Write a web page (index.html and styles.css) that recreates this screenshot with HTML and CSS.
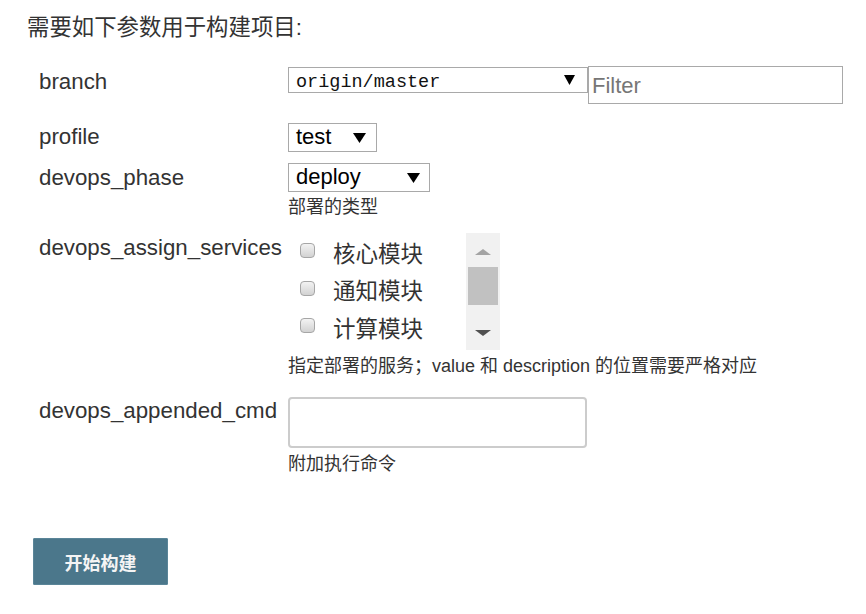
FILE: index.html
```html
<!DOCTYPE html>
<html lang="zh-CN">
<head>
<meta charset="utf-8">
<title>构建参数</title>
<link rel="stylesheet" href="styles.css">
</head>
<body>
<div class="page">
  <div class="title">需要如下参数用于构建项目:</div>
  <div class="params">
    <div class="row row-branch">
      <div class="label lb-branch">branch</div>
      <div class="value value-inline">
        <div class="select select-branch">
          <span class="sel-text mono">origin/master</span>
          <svg class="arrow arrow-branch" width="11" height="10" viewBox="0 0 11 10"><polygon points="0,0 11,0 5.5,10" fill="#000"/></svg>
        </div>
        <input class="filter" type="text" placeholder="Filter">
      </div>
    </div>

    <div class="row row-profile">
      <div class="label lb-profile">profile</div>
      <div class="value">
        <div class="select select-test">
          <span class="sel-text">test</span>
          <svg class="arrow" width="13" height="10" viewBox="0 0 13 10"><polygon points="0,0 13,0 6.5,10" fill="#000"/></svg>
        </div>
      </div>
    </div>

    <div class="row row-phase">
      <div class="label lb-phase">devops_phase</div>
      <div class="value">
        <div class="select select-deploy">
          <span class="sel-text">deploy</span>
          <svg class="arrow" width="13" height="10" viewBox="0 0 13 10"><polygon points="0,0 13,0 6.5,10" fill="#000"/></svg>
        </div>
        <div class="hint hint-phase">部署的类型</div>
      </div>
    </div>

    <div class="row row-assign">
      <div class="label lb-assign">devops_assign_services</div>
      <div class="value">
        <div class="multi">
          <div class="multi-list">
            <label class="opt"><input class="cb" type="checkbox"><span>核心模块</span></label>
            <label class="opt"><input class="cb" type="checkbox"><span>通知模块</span></label>
            <label class="opt"><input class="cb" type="checkbox"><span>计算模块</span></label>
          </div>
          <div class="vscroll">
            <div class="sb-btn"><span class="tri-up"></span></div>
            <div class="sb-thumb"></div>
            <div class="sb-track"></div>
            <div class="sb-btn sb-btn-down"><span class="tri-down"></span></div>
          </div>
        </div>
        <div class="hint hint-assign">指定部署的服务；value 和 description 的位置需要严格对应</div>
      </div>
    </div>

    <div class="row row-cmd">
      <div class="label lb-cmd">devops_appended_cmd</div>
      <div class="value">
        <textarea class="cmd"></textarea>
        <div class="hint hint-cmd">附加执行命令</div>
      </div>
    </div>
  </div>

  <button class="build-btn" type="button">开始构建</button>
</div>
</body>
</html>
```

FILE: styles.css
```css
* {
  box-sizing: border-box;
}

html,
body {
  margin: 0;
  padding: 0;
  background: #ffffff;
}

body {
  font-family: "Liberation Sans", Arial, "Noto Sans CJK SC", sans-serif;
  color: #333333;
}

.page {
  padding: 14px 0 0 27px;
}

.title {
  font-size: 22.4px;
  line-height: 28px;
  height: 28px;
}

.params {
  margin-top: 24px;
}

.row {
  display: flex;
  align-items: flex-start;
  padding-left: 12px;
}

.label {
  flex: none;
  width: 249px;
  font-size: 22.3px;
  line-height: 26px;
  color: #333333;
  white-space: nowrap;
}

.value {
  display: flex;
  flex-direction: column;
  align-items: flex-start;
}

.value-inline {
  flex-direction: row;
}

/* row spacing */
.row-profile { margin-top: 19px; }
.row-phase { margin-top: 11px; }
.row-assign { margin-top: 15px; }
.row-cmd { margin-top: 20px; }

.lb-branch { margin-top: 3px; }
.lb-profile { margin-top: 1px; }
.lb-phase { margin-top: 2px; }
.lb-assign { margin-top: 2px; }
.lb-cmd { margin-top: 1px; }

/* fake selects */
.select {
  display: flex;
  align-items: center;
  height: 29px;
  padding: 0 0 2px 7px;
  border: 1px solid #a9a9a9;
  background: #ffffff;
  color: #000000;
  font-size: 22px;
}

.sel-text {
  line-height: 24px;
  white-space: nowrap;
}

.arrow {
  display: block;
  margin-left: auto;
  margin-top: 2px;
  flex: none;
}

.select-test {
  width: 89px;
  padding-right: 10px;
}

.select-deploy {
  width: 142px;
  padding-right: 9px;
}

.select-branch {
  width: 300px;
  height: 26px;
  margin-top: 1px;
  padding: 0 12px 0 7px;
}

.select-branch .arrow {
  margin-top: 0;
}

.mono {
  font-family: "Liberation Mono", "Courier New", monospace;
  font-size: 18.5px;
  margin-top: 6px;
  color: #111111;
}

.filter {
  width: 255px;
  height: 38px;
  margin: 0;
  padding: 2px 3px 0;
  border: 1px solid #a9a9a9;
  border-radius: 0;
  font-family: "Liberation Sans", Arial, sans-serif;
  font-size: 22px;
  color: #000000;
  outline: none;
}

.filter::placeholder {
  color: #767676;
}

/* hints */
.hint {
  font-size: 18px;
  line-height: 22px;
  height: 22px;
  color: #333333;
  white-space: nowrap;
}

.hint-phase { margin-top: 4px; }
.hint-assign { margin-top: 5px; }
.hint-cmd { margin-top: 5px; }

/* multi checkbox list */
.multi {
  display: flex;
  height: 117px;
}

.multi-list {
  width: 178px;
}

.opt {
  display: flex;
  align-items: center;
  height: 37.5px;
  padding-left: 12px;
  font-size: 22.5px;
  color: #333333;
}

.cb {
  appearance: none;
  -webkit-appearance: none;
  width: 15px;
  height: 15px;
  margin: -2px 18px 0 0;
  border: 1px solid #a6a6a6;
  border-radius: 4px;
  background: linear-gradient(#f3f3f3, #d2d2d2);
  flex: none;
}

.vscroll {
  width: 34px;
  height: 117px;
  background: #f1f1f1;
  display: flex;
  flex-direction: column;
}

.sb-btn {
  height: 34px;
  display: flex;
  align-items: center;
  justify-content: center;
}

.sb-btn-down {
  height: 35px;
}

.sb-thumb {
  height: 38px;
  margin: 0 2px;
  background: #c1c1c1;
}

.sb-track {
  flex: 1;
}

.tri-up {
  width: 0;
  height: 0;
  border-left: 8px solid transparent;
  border-right: 8px solid transparent;
  border-bottom: 6px solid #a3a3a3;
  margin-top: 3px;
}

.tri-down {
  width: 0;
  height: 0;
  border-left: 8px solid transparent;
  border-right: 8px solid transparent;
  border-top: 6px solid #505050;
}

/* textarea */
.cmd {
  display: block;
  width: 299px;
  height: 51px;
  margin: 0;
  padding: 4px;
  border: 2px solid #cccccc;
  border-radius: 4px;
  resize: none;
  font-family: "Liberation Sans", Arial, sans-serif;
  font-size: 16px;
  outline: none;
}

/* button */
.build-btn {
  display: block;
  margin: 63px 0 0 6px;
  width: 135px;
  height: 47px;
  padding: 0;
  border: 1px solid #5a8598;
  border-radius: 1px;
  background: #4b778b;
  color: #f4f4f4;
  font-family: "Noto Sans CJK SC", "Liberation Sans", sans-serif;
  font-size: 18px;
  font-weight: 700;
}
```
